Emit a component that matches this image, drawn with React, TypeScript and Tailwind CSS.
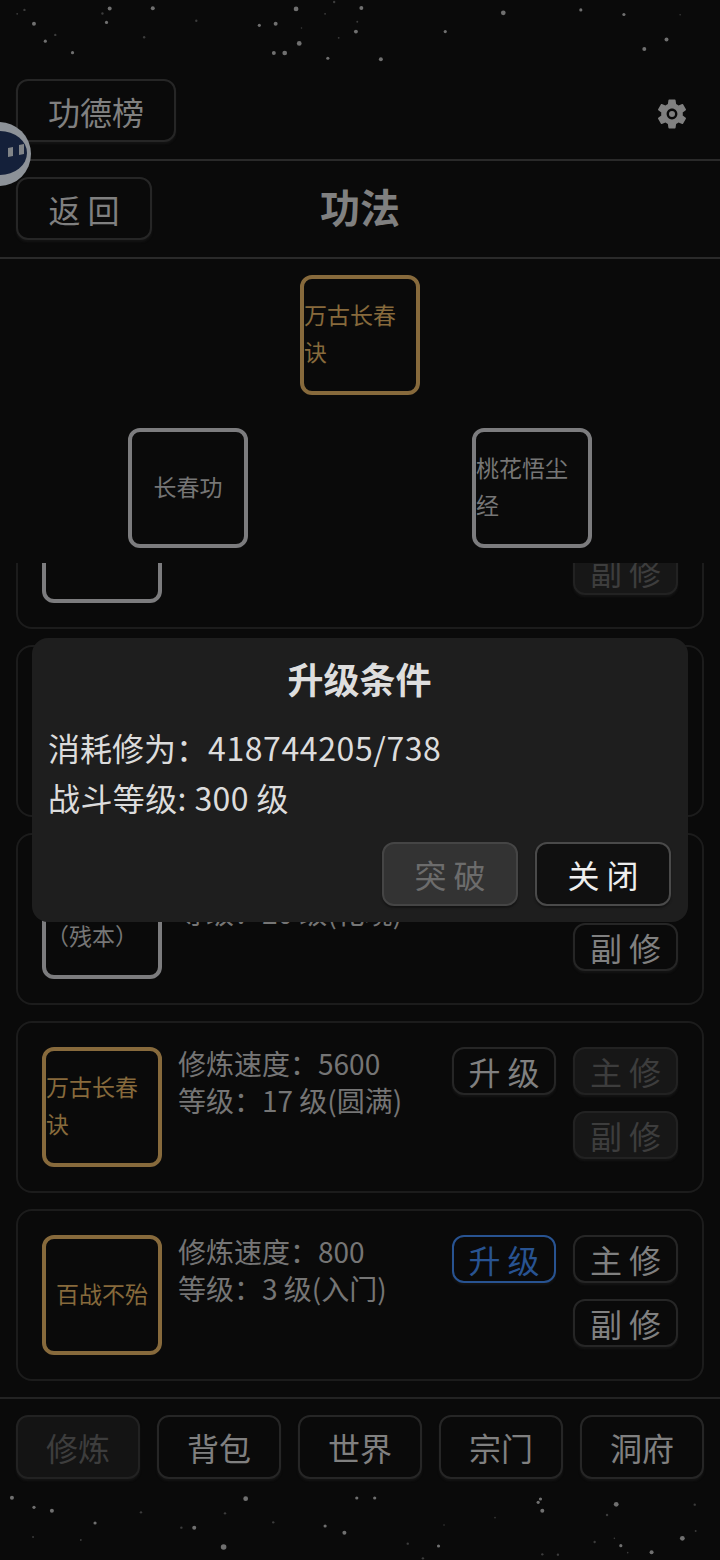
import { ReactNode } from 'react';

const cjk = "font-['Noto_Sans_CJK_SC','Noto_Sans',sans-serif]";

// star positions read off the reference crops (x in 720 -> 1568 units, y in 3x units)
const topStars = [
  [643, 27, 3], [787, 24, 2.5], [327, 25, 2.5], [1100, 39, 3], [1271, 30, 2], [1366, 44, 2], [232, 26, 2.5],
  [216, 41, 1.5], [44, 30, 1.5], [28, 42, 1.2], [65, 72, 2.5], [225, 68, 2], [423, 63, 1.5], [562, 77, 2],
  [598, 72, 2.5], [707, 42, 1.2], [727, 6, 1.5], [778, 66, 1.2], [775, 96, 2.5], [737, 115, 1.2], [972, 96, 2],
  [650, 132, 3], [112, 106, 1.5], [90, 125, 2], [308, 113, 1.5], [1460, 120, 2.5], [1411, 149, 2.5], [150, 160, 2],
  [594, 161, 2.5], [618, 161, 3], [713, 177, 2], [830, 180, 2.5], [655, 85, 1], [1490, 45, 1],
];
const bottomStars = [
  [26, 323, 2.5], [535, 326, 3], [777, 324, 2], [816, 324, 2], [1177, 327, 2], [1172, 337, 2], [74, 352, 2],
  [113, 362, 2.5], [307, 367, 1.5], [490, 370, 1.5], [1181, 362, 2.5], [1342, 343, 3], [1513, 344, 1.5], [1322, 375, 1.5],
  [207, 399, 2], [595, 397, 1.5], [395, 413, 1.5], [423, 413, 2.5], [708, 408, 2], [750, 428, 2.5], [967, 405, 1],
  [1078, 383, 1], [72, 441, 1.2], [176, 450, 1.2], [487, 471, 3.5], [888, 461, 1.5], [955, 468, 2], [1295, 456, 1.5],
  [1338, 445, 1], [1352, 467, 2], [1486, 445, 3], [1515, 423, 1.2], [1419, 487, 2.5], [1181, 493, 1.5], [1215, 494, 1.5],
  [921, 505, 1.5], [1367, 488, 1],
];

function Stars({ stars, top, height }: { stars: number[][]; top: number; height: number }) {
  return (
    <svg width="720" height={height} viewBox={`0 0 720 ${height}`} className="block blur-[0.6px]" aria-hidden>
      {stars.map(([x, y, r], i) => (
        <circle key={i} cx={(x * 720) / 1568} cy={y / 3 - top} r={r * 0.8} fill={r >= 2 ? '#707070' : '#3c3c3c'} />
      ))}
    </svg>
  );
}

function GameButton({ children, className = '' }: { children: ReactNode; className?: string }) {
  return (
    <button
      type="button"
      className={`flex items-center justify-center rounded-xl border-2 shadow-[0_2px_2px_#141414] ${className}`}
    >
      {children}
    </button>
  );
}

const normalBtn = 'border-[#262626] bg-[#0a0a0a] text-[#808080]';
const offBtn = 'border-[#222222] bg-[#171717] text-[#3d3d3d]';

function SkillIcon({ name, gold }: { name: string; gold?: boolean }) {
  return (
    <div
      className={`flex h-[120px] w-[120px] shrink-0 items-center justify-center rounded-xl border-4 pb-1 text-[23px] leading-[37px] ${
        gold ? 'border-[#876a3c] text-[#876a3c]' : 'border-[#7c7c7e] text-[#767676]'
      }`}
    >
      <span>{name}</span>
    </div>
  );
}

type Skill = {
  name: string;
  gold?: boolean;
  speed: string;
  level: string;
  upgrade: 'normal' | 'active' | 'off';
  main: boolean;
  side: boolean;
};

const skills: Skill[] = [
  { name: '长春功', speed: '200', level: '9 级(大成)', upgrade: 'normal', main: false, side: false },
  { name: '桃花悟尘经', speed: '1200', level: '12 级(小成)', upgrade: 'normal', main: true, side: true },
  { name: '长春功（残本）', speed: '3000', level: '20 级(化境)', upgrade: 'normal', main: true, side: true },
  { name: '万古长春诀', gold: true, speed: '5600', level: '17 级(圆满)', upgrade: 'normal', main: false, side: false },
  { name: '百战不殆', gold: true, speed: '800', level: '3 级(入门)', upgrade: 'active', main: true, side: true },
];

function SkillCard({ skill }: { skill: Skill }) {
  return (
    <div className="flex h-[172px] shrink-0 rounded-2xl border-2 border-[#1c1c1c] p-6">
      <SkillIcon name={skill.name} gold={skill.gold} />
      <div className="-mt-[2px] ml-4 flex-1 text-[28px] leading-[37px] text-[#757575]">
        <div>修炼速度：{skill.speed}</div>
        <div>等级：{skill.level}</div>
      </div>
      <GameButton
        className={`h-12 w-[104px] text-[32px] ${
          skill.upgrade === 'active' ? 'border-[#285391] bg-[#0a0a0a] text-[#285391]' : normalBtn
        }`}
      >
        升 级
      </GameButton>
      <div className="ml-[17px] flex w-[105px] flex-col gap-4">
        <GameButton className={`h-12 text-[32px] ${skill.main ? normalBtn : offBtn}`}>主 修</GameButton>
        <GameButton className={`h-12 text-[32px] ${skill.side ? normalBtn : offBtn}`}>副 修</GameButton>
      </div>
    </div>
  );
}

export default function App() {
  const nav = ['修炼', '背包', '世界', '宗门', '洞府'];

  return (
    <div className={`relative flex h-[1560px] w-[720px] flex-col overflow-hidden bg-[#0a0a0a] ${cjk}`}>
      <Stars stars={topStars} top={0} height={80} />

      {/* top bar */}
      <div className="flex h-[82px] shrink-0 items-start justify-between border-b-2 border-[#2a2a2a] pl-4 pr-[30px]">
        <GameButton className={`h-[63px] w-40 text-[32px] ${normalBtn}`}>功德榜</GameButton>
        <svg viewBox="0 0 24 24" className="mt-[17px] h-9 w-9" fill="#808080" aria-hidden>
          <path d="M19.14 12.94c.04-.3.06-.61.06-.94 0-.32-.02-.64-.07-.94l2.03-1.58a.49.49 0 0 0 .12-.61l-1.92-3.32a.488.488 0 0 0-.59-.22l-2.39.96c-.5-.38-1.03-.7-1.62-.94l-.36-2.54a.484.484 0 0 0-.48-.41h-3.84c-.24 0-.43.17-.47.41l-.36 2.54c-.59.24-1.13.57-1.62.94l-2.39-.96c-.22-.08-.47 0-.59.22L2.74 8.87c-.12.21-.08.47.12.61l2.03 1.58c-.05.3-.09.63-.09.94s.02.64.07.94l-2.03 1.58a.49.49 0 0 0-.12.61l1.92 3.32c.12.22.37.29.59.22l2.39-.96c.5.38 1.03.7 1.62.94l.36 2.54c.05.24.24.41.48.41h3.84c.24 0 .44-.17.47-.41l.36-2.54c.59-.24 1.13-.56 1.62-.94l2.39.96c.22.08.47 0 .59-.22l1.92-3.32c.12-.22.07-.47-.12-.61l-2.01-1.58zM12 15.6c-1.98 0-3.6-1.62-3.6-3.6s1.62-3.6 3.6-3.6 3.6 1.62 3.6 3.6-1.62 3.6-3.6 3.6z" />
          <circle cx="12" cy="12" r="2" />
        </svg>
      </div>

      {/* title row */}
      <div className="relative flex h-[98px] shrink-0 items-center justify-center border-b-2 border-[#2a2a2a] pb-[6px]">
        <GameButton className={`absolute left-4 top-4 h-[63px] w-[136px] text-[32px] ${normalBtn}`}>返 回</GameButton>
        <h1 className="text-[40px] font-bold leading-none text-[#808080]">功法</h1>
      </div>

      {/* skill tree */}
      <div className="flex h-[304px] shrink-0 flex-col items-center bg-[#0a0a0a] pt-4">
        <SkillIcon name="万古长春诀" gold />
        <div className="mt-[33px] flex gap-[224px]">
          <SkillIcon name="长春功" />
          <SkillIcon name="桃花悟尘经" />
        </div>
      </div>

      {/* skill list, scrolled part way */}
      <div className="h-[834px] shrink-0 overflow-hidden">
        <div className="-mt-[106px] flex flex-col gap-4 px-4">
          {skills.map((s) => (
            <SkillCard key={s.name} skill={s} />
          ))}
        </div>
      </div>

      {/* bottom nav */}
      <div className="flex shrink-0 gap-[17px] border-t-2 border-[#232323] px-4 pt-4">
        {nav.map((n, i) => (
          <GameButton
            key={n}
            className={`h-16 w-[124px] text-[32px] ${i === 0 ? 'border-[#222222] bg-[#141414] text-[#3d3d3d]' : normalBtn}`}
          >
            {n}
          </GameButton>
        ))}
      </div>
      <div className="mt-px">
        <Stars stars={bottomStars} top={90} height={80} />
      </div>

      {/* floating mascot */}
      <svg viewBox="0 0 64 64" className="absolute -left-[33px] top-[122px] h-16 w-16" aria-hidden>
        <circle cx="32" cy="32" r="32" fill="#8d9298" />
        <ellipse cx="33" cy="31" rx="27" ry="22" fill="#14203a" />
        <path d="M41 26l5-1v9l-5 1zM52 23l5-1v10l-5 1z" fill="#808488" />
      </svg>

      {/* upgrade dialog */}
      <div className="absolute left-8 top-[638px] flex h-[284px] w-[656px] flex-col rounded-2xl bg-[#1e1e1e] pl-4 pr-[17px] text-[#dcdcdc]">
        <h2 className="mt-[17px] text-center text-[36px] font-bold leading-[46px] text-[#dedede]">升级条件</h2>
        <div className="mt-[21px] text-[32px] leading-[50px]">
          <div>
            消耗修为：<span className="tracking-[0.6px]">418744205/738</span>
          </div>
          <div className="tracking-[0.4px]">战斗等级: 300 级</div>
        </div>
        <div className="mb-4 mt-auto flex justify-end gap-[17px]">
          <GameButton className="h-16 w-[136px] border-[#454545] bg-[#333333] text-[32px] text-[#6c6c6c]">突 破</GameButton>
          <GameButton className="h-16 w-[136px] border-[#4a4a4a] bg-[#101010] text-[32px] text-[#eeeeee]">关 闭</GameButton>
        </div>
      </div>
    </div>
  );
}
